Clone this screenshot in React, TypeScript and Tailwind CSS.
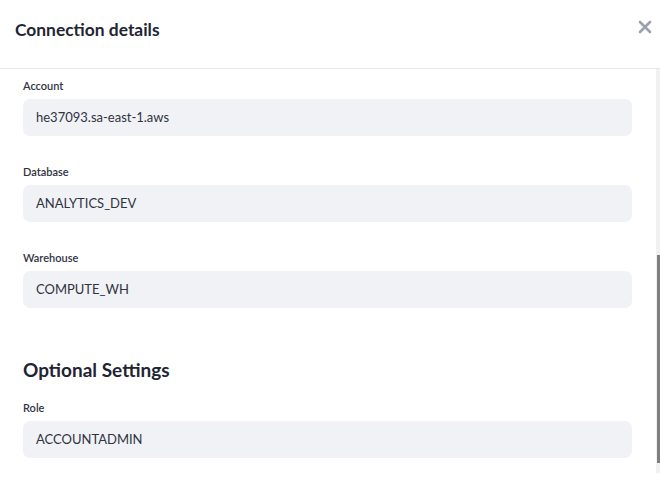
import React from 'react';

interface FieldProps {
  label: string;
  value: string;
}

const Field: React.FC<FieldProps> = ({ label, value }) => (
  <div className="flex flex-col">
    <label className="text-[11px] font-semibold text-[#31333f] leading-[14px] h-[14px] mb-[6px]">{label}</label>
    <div className="h-[37px] rounded-[7px] bg-[#f0f2f6] flex items-center px-[13px] text-[13px] text-[#31333f]">
      {value}
    </div>
  </div>
);

export default function App() {
  return (
    <div className="relative w-[660px] h-[477px] bg-white overflow-hidden" style={{ fontFamily: 'Lato, "Noto Sans", sans-serif' }}>
      {/* Header */}
      <div className="h-[69px] border-b border-[#e6e7eb] flex items-center justify-between pl-[15px] pr-[6px]">
        <h2 className="text-[17.4px] font-bold text-[#1f2533] -mt-[8px]">Connection details</h2>
        <button className="w-[18px] h-[18px] flex items-center justify-center -mt-[14px] text-[#9aa0ad]">
          <svg width="14" height="14" viewBox="0 0 14 14" fill="none" stroke="currentColor" strokeWidth="2.6" strokeLinecap="round">
            <path d="M2 2L12 12M12 2L2 12" />
          </svg>
        </button>
      </div>

      {/* Body */}
      <div className="pl-[23px] pr-[28px] pt-[10px] flex flex-col">
        <div className="flex flex-col gap-[29px]">
          <Field label="Account" value="he37093.sa-east-1.aws" />
          <Field label="Database" value="ANALYTICS_DEV" />
          <Field label="Warehouse" value="COMPUTE_WH" />
        </div>
        <h3 className="mt-[50px] text-[19px] font-bold text-[#1f2533] leading-[24px]">Optional Settings</h3>
        <div className="mt-[19px]">
          <Field label="Role" value="ACCOUNTADMIN" />
        </div>
      </div>

      {/* Scrollbar */}
      <div className="absolute right-0 top-[69px] bottom-[4px] w-[4px] bg-[#f1f1f1]">
        <div className="absolute left-[1px] right-0 top-[186px] h-[208px] bg-[#7f7f7f]" />
      </div>
    </div>
  );
}
